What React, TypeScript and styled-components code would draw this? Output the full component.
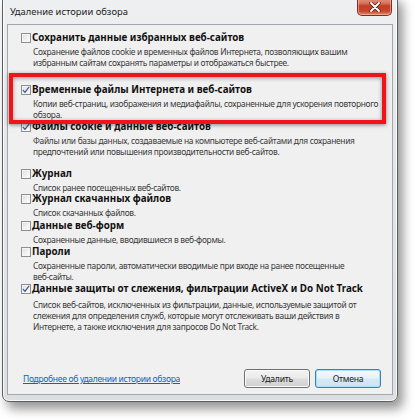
import React from 'react';
import styled, { createGlobalStyle } from 'styled-components';

const Global = createGlobalStyle`
  html, body { margin: 0; padding: 0; background: #ffffff; }
  body {
    width: 415px; height: 420px; overflow: hidden;
    font-family: "Noto Sans", "DejaVu Sans", sans-serif;
  }
`;

const Stage = styled.div`
  width: 415px;
  height: 420px;
  padding-left: 2px;
  box-sizing: border-box;
  overflow: hidden;
`;

const Window = styled.div`
  margin-top: -6px;
  width: 396px;
  height: 408px;
  box-sizing: border-box;
  border: 1px solid #5a5d61;
  border-radius: 7px;
  background: linear-gradient(180deg, #eef0f2 0%, #e3e5e8 40%, #dcdfe2 100%);
  box-shadow: 5px 7px 11px rgba(0, 0, 0, 0.42), inset 0 0 0 1px rgba(255, 255, 255, 0.8);
  display: flex;
  flex-direction: column;
  padding: 0 4px 6px 4px;
`;

const TitleBar = styled.div`
  height: 29px;
  display: flex;
  align-items: flex-start;
  justify-content: space-between;
`;

const Caption = styled.div`
  margin-top: 11px;
  padding-left: 3px;
  font-size: 9.4px;
  line-height: 12px;
  color: #1e1e1e;
`;

const CloseButton = styled.div`
  width: 35px;
  height: 21px;
  margin-right: 1px;
  box-sizing: border-box;
  border: 1px solid #7a2f22;
  border-top: none;
  border-radius: 0 0 5px 5px;
  background: linear-gradient(180deg, #e7a898 0%, #d8765f 40%, #c43d23 55%, #c8462c 80%, #e08a6c 100%);
  box-shadow: inset 0 0 0 1px rgba(255, 210, 200, 0.5);
  display: flex;
  align-items: center;
  justify-content: center;
  padding-top: 4px;
`;

const Client = styled.div`
  flex: 1;
  position: relative;
  border: 1px solid #a2a7ad;
  background: #f0f0f0;
  display: flex;
  flex-direction: column;
  padding: 7px 0 0 13px;
`;

const List = styled.div`
  display: flex;
  flex-direction: column;
`;

const Item = styled.div<{ $gap: number }>`
  display: flex;
  align-items: flex-start;
  margin-top: ${(p) => p.$gap}px;
`;

const Box = styled.div`
  width: 10px;
  height: 10px;
  margin-top: 1px;
  flex: none;
  box-sizing: border-box;
  border: 1px solid #8e8f8f;
  background: linear-gradient(135deg, #dcdcdc 0%, #f3f3f3 60%, #ffffff 100%);
  box-shadow: inset 0 0 0 1px #f4f4f4;
  display: flex;
  align-items: center;
  justify-content: center;
`;

const TextCol = styled.div`
  margin-left: 1px;
  display: flex;
  flex-direction: column;
`;

const ItemTitle = styled.div`
  font-size: 9.8px;
  line-height: 12px;
  font-weight: 700;
  color: #111;
  white-space: nowrap;
`;

const Desc = styled.div<{ $gap: number }>`
  margin-top: ${(p) => p.$gap}px;
  margin-left: 1px;
  font-size: 8.4px;
  letter-spacing: -0.3px;
  line-height: 11px;
  color: #3a3a3a;
`;

const DescLine = styled.div`
  white-space: nowrap;
`;

const Highlight = styled.div`
  position: absolute;
  left: 1px;
  top: 48px;
  width: 377px;
  height: 51px;
  box-sizing: border-box;
  border: 4px solid #f0141a;
  box-shadow: 0 1px 4px rgba(0, 0, 0, 0.45), inset 0 1px 4px rgba(0, 0, 0, 0.4);
  pointer-events: none;
`;

const Footer = styled.div`
  margin-top: auto;
  display: flex;
  align-items: center;
  justify-content: space-between;
  padding: 0 11px 6px 2px;
`;

const HelpLink = styled.a`
  font-size: 8.5px;
  letter-spacing: -0.3px;
  color: #0b62c7;
  text-decoration: underline;
  cursor: pointer;
`;

const Buttons = styled.div`
  display: flex;
  gap: 5px;
`;

const Button = styled.button<{ $focused?: boolean }>`
  width: 66px;
  height: 19px;
  box-sizing: border-box;
  padding: 0;
  border: 1px solid ${(p) => (p.$focused ? '#3c7fb1' : '#707070')};
  border-radius: 3px;
  background: ${(p) =>
    p.$focused
      ? 'linear-gradient(180deg, #f4f9fc 0%, #e6f1f9 48%, #d6e9f5 52%, #cde3f2 100%)'
      : 'linear-gradient(180deg, #f2f2f2 0%, #ebebeb 48%, #dddddd 52%, #cfcfcf 100%)'};
  box-shadow: inset 0 0 0 1px ${(p) => (p.$focused ? '#a6e0fb' : '#fbfbfb')};
  font-family: "Noto Sans", "DejaVu Sans", sans-serif;
  font-size: 8.6px;
  letter-spacing: -0.2px;
  color: #1a1a1a;
`;

type Entry = { title: string; desc: string[]; checked?: boolean; gap: number; descGap?: number };

const entries: Entry[] = [
  {
    title: 'Сохранить данные избранных веб-сайтов',
    desc: [
      'Сохранение файлов cookie и временных файлов Интернета, позволяющих вашим',
      'избранным сайтам сохранять параметры и отображаться быстрее.',
    ],
    gap: 0,
  },
  {
    title: 'Временные файлы Интернета и веб-сайтов',
    desc: ['Копии веб-страниц, изображения и медиафайлы, сохраненные для ускорения повторного', 'обзора.'],
    checked: true,
    gap: 16,
  },
  {
    title: 'Файлы cookie и данные веб-сайтов',
    desc: [
      'Файлы или базы данных, создаваемые на компьютере веб-сайтами для сохранения',
      'предпочтений или повышения производительности веб-сайтов.',
    ],
    checked: true,
    gap: 1,
  },
  { title: 'Журнал', desc: ['Список ранее посещенных веб-сайтов.'], gap: 11 },
  { title: 'Журнал скачанных файлов', desc: ['Список скачанных файлов.'], gap: 0 },
  { title: 'Данные веб-форм', desc: ['Сохраненные данные, вводившиеся в веб-формы.'], gap: 2 },
  {
    title: 'Пароли',
    desc: ['Сохраненные пароли, автоматически вводимые при входе на ранее посещенные', 'веб-сайты.'],
    gap: 1,
  },
  {
    title: 'Данные защиты от слежения, фильтрации ActiveX и Do Not Track',
    desc: [
      'Список веб-сайтов, исключенных из фильтрации, данные, используемые защитой от',
      'слежения для определения служб, которые могут отслеживать ваши действия в',
      'Интернете, а также исключения для запросов Do Not Track.',
    ],
    checked: true,
    gap: 1,
    descGap: 4,
  },
];

const Check = () => (
  <svg width="8" height="8" viewBox="0 0 8 8">
    <path d="M1.2 4.3 L3 6.4 L6.9 1.2" fill="none" stroke="#3d5a9c" strokeWidth="1.2" strokeLinecap="round" strokeLinejoin="round" />
  </svg>
);

const CloseGlyph = () => (
  <svg width="12" height="10" viewBox="0 0 12 10">
    <path d="M2 1 L10 9 M10 1 L2 9" stroke="#5b2218" strokeWidth="3.4" strokeLinecap="round" />
    <path d="M2 1 L10 9 M10 1 L2 9" stroke="#ffffff" strokeWidth="1.8" strokeLinecap="round" />
  </svg>
);

export default function App() {
  return (
    <>
      <Global />
      <Stage>
        <Window>
          <TitleBar>
            <Caption>Удаление истории обзора</Caption>
            <CloseButton>
              <CloseGlyph />
            </CloseButton>
          </TitleBar>
          <Client>
            <List>
              {entries.map((e) => (
                <Item key={e.title} $gap={e.gap}>
                  <Box>{e.checked ? <Check /> : null}</Box>
                  <TextCol>
                    <ItemTitle>{e.title}</ItemTitle>
                    <Desc $gap={e.descGap ?? 2}>
                      {e.desc.map((l) => (
                        <DescLine key={l}>{l}</DescLine>
                      ))}
                    </Desc>
                  </TextCol>
                </Item>
              ))}
            </List>
            <Highlight />
            <Footer>
              <HelpLink>Подробнее об удалении истории обзора</HelpLink>
              <Buttons>
                <Button>Удалить</Button>
                <Button $focused>Отмена</Button>
              </Buttons>
            </Footer>
          </Client>
        </Window>
      </Stage>
    </>
  );
}
